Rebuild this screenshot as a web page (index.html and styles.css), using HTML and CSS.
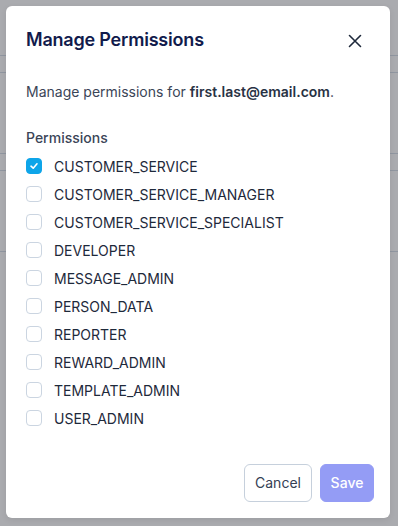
FILE: index.html
```html
<!DOCTYPE html>
<html>
<head>
<meta charset="utf-8">
<link rel="stylesheet" href="styles.css">
</head>
<body>
<div class="modal">
  <div class="header">
    <h2 class="title">Manage Permissions</h2>
    <button class="close" aria-label="Close">
      <svg width="14" height="14" viewBox="0 0 14 14"><path d="M1.5 1.5 L12.5 12.5 M12.5 1.5 L1.5 12.5" stroke="#1e293b" stroke-width="1.6" stroke-linecap="round" fill="none"/></svg>
    </button>
  </div>
  <p class="desc">Manage permissions for <strong>first.last@email.com</strong>.</p>
  <div class="label">Permissions</div>
  <ul class="list">
    <li class="row"><span class="cb checked"><svg width="10" height="10" viewBox="0 0 10 10"><path d="M2 5.2 L4.2 7.2 L8 2.8" stroke="#fff" stroke-width="1.6" fill="none" stroke-linecap="round" stroke-linejoin="round"/></svg></span><span>CUSTOMER_SERVICE</span></li>
    <li class="row"><span class="cb"></span><span>CUSTOMER_SERVICE_MANAGER</span></li>
    <li class="row"><span class="cb"></span><span>CUSTOMER_SERVICE_SPECIALIST</span></li>
    <li class="row"><span class="cb"></span><span>DEVELOPER</span></li>
    <li class="row"><span class="cb"></span><span>MESSAGE_ADMIN</span></li>
    <li class="row"><span class="cb"></span><span>PERSON_DATA</span></li>
    <li class="row"><span class="cb"></span><span>REPORTER</span></li>
    <li class="row"><span class="cb"></span><span>REWARD_ADMIN</span></li>
    <li class="row"><span class="cb"></span><span>TEMPLATE_ADMIN</span></li>
    <li class="row"><span class="cb"></span><span>USER_ADMIN</span></li>
  </ul>
  <div class="footer">
    <button class="btn cancel">Cancel</button>
    <button class="btn save">Save</button>
  </div>
</div>
</body>
</html>
```
FILE: styles.css
```css
html, body { margin: 0; padding: 0; }
body {
  width: 398px;
  height: 526px;
  overflow: hidden;
  font-family: Inter, "Noto Sans", sans-serif;
  background-color: #aaabaf;
  background-image:
    linear-gradient(#9096a0, #9096a0),
    linear-gradient(#9096a0, #9096a0),
    linear-gradient(#9096a0, #9096a0),
    linear-gradient(#9096a0, #9096a0),
    linear-gradient(#9096a0, #9096a0);
  background-size: 100% 1px;
  background-repeat: no-repeat;
  background-position: 0 55px, 0 72px, 0 153px, 0 170px, 0 251px;
  padding: 6px;
  box-sizing: border-box;
}
.modal {
  width: 384px;
  height: 512px;
  background: #fff;
  border-radius: 6px;
  box-sizing: border-box;
  padding: 20px 20px 16px;
  display: flex;
  flex-direction: column;
  box-shadow: 0 2px 6px rgba(0,0,0,0.08);
}
.header {
  display: flex;
  align-items: center;
  justify-content: space-between;
  height: 28px;
}
.title {
  margin: 0;
  font-size: 18px;
  line-height: 28px;
  font-weight: 600;
  letter-spacing: -0.2px;
  color: #111b4c;
}
.close {
  border: 0;
  background: none;
  padding: 0;
  margin-right: 8px;
  width: 14px;
  height: 14px;
  display: flex;
  margin-top: 2px;
}
.desc {
  margin: 28px 0 0;
  font-size: 14px;
  line-height: 20px;
  color: #3b4557;
}
.desc strong { font-weight: 600; color: #283244; }
.label {
  margin-top: 26px;
  font-size: 14px;
  line-height: 20px;
  font-weight: 500;
  color: #3b4557;
}
.list {
  list-style: none;
  margin: 4px 0 0;
  padding: 0;
}
.row {
  height: 28px;
  display: flex;
  align-items: center;
  gap: 12px;
  font-size: 14px;
  color: #1e293b;
}
.cb {
  width: 14px;
  height: 14px;
  border: 1px solid #cbd5e1;
  border-radius: 4px;
  display: flex;
  align-items: center;
  justify-content: center;
  flex-shrink: 0;
}
.cb.checked {
  background: #0ea5e9;
  border-color: #0ea5e9;
}
.footer {
  margin-top: auto;
  display: flex;
  justify-content: flex-end;
  gap: 8px;
  margin-right: -4px;
}
.btn {
  height: 38px;
  font-family: Inter, "Noto Sans", sans-serif;
  font-size: 14px;
  font-weight: 400;
  line-height: 20px;
  border-radius: 6px;
  padding: 0;
  display: flex;
  align-items: center;
  justify-content: center;
}
.cancel {
  background: #fff;
  border: 1px solid #c6d0dc;
  color: #344054;
  width: 68px;
}
.save {
  background: #949cf5;
  border: 1px solid #949cf5;
  color: #fff;
  width: 54px;
  font-weight: 500;
}
```
